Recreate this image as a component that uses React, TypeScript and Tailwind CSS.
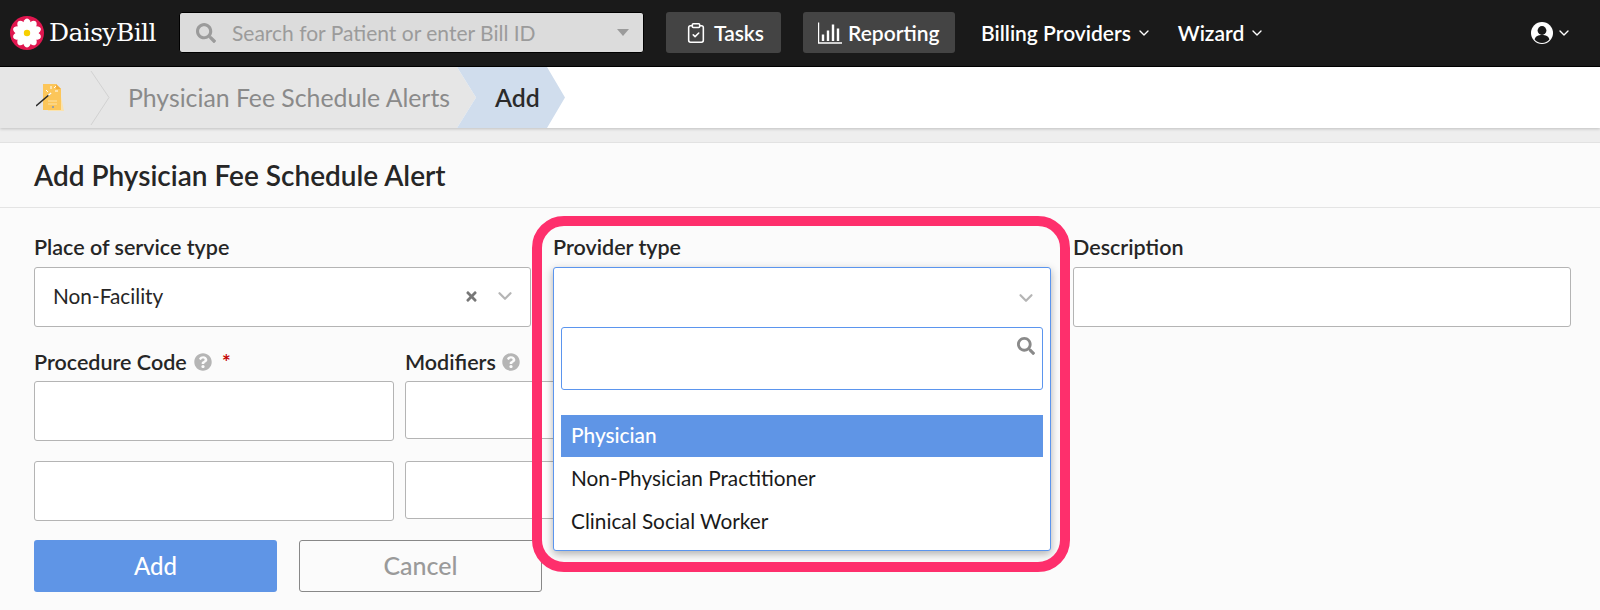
import { ChevronDown, ClipboardCheck } from "lucide-react";
import { FaQuestionCircle, FaSearch, FaTimes } from "react-icons/fa";

const FONT = "font-['Lato','Liberation_Sans',sans-serif]";

// Flor del logo
const Logo = () => (
  <svg viewBox="0 0 34 34" className="h-[34px] w-[34px] shrink-0">
    <circle cx="17" cy="17" r="17" fill="#e0164f" />
    {[0, 36, 72, 108, 144, 180, 216, 252, 288, 324].map((a) => (
      <ellipse key={a} cx="17" cy="8.5" rx="3.9" ry="6" fill="#fff" transform={`rotate(${a} 17 17)`} />
    ))}
    <circle cx="17" cy="17" r="4.6" fill="#fff" />
    <circle cx="17" cy="17" r="3.2" fill="#f7d000" />
  </svg>
);

const AlertsIcon = () => (
  <svg viewBox="0 0 32 32" className="h-[32px] w-[32px]">
    <path d="M9 5h14l5 24H12z" fill="#fbe3ad" />
    <path d="M7 2h13l5 5v21H7z" fill="#fcc65a" />
    <path d="M20 2l5 5h-5z" fill="#f3ad3a" />
    <path d="M0 24L14 12" stroke="#2b2b2b" strokeWidth="1.6" />
    <path d="M12.4 13.4L15 11" stroke="#fff" strokeWidth="1.6" />
    <path d="M15 4v3M19 9h3M18 6l2-2M10 8l2 2" stroke="#fff" strokeWidth="1" />
    <path d="M12 19h9M12 22h9" stroke="#fde3a8" strokeWidth="1" />
    <circle cx="17" cy="25" r="1" fill="#7f93b8" />
  </svg>
);

const ReportIcon = () => (
  <svg viewBox="0 0 24 24" className="h-[25px] w-[24px]" fill="none" stroke="#fff">
    <path d="M0.5 2v20.500H24" strokeWidth="1.4" />
    <path d="M5 14v6.500M10 10v10.500M15 4v16.500M20 8v12.500" strokeWidth="2.4" />
  </svg>
);

const UserIcon = () => (
  <svg viewBox="0 0 22 22" className="h-[22px] w-[22px]">
    <circle cx="11" cy="11" r="11" fill="#fff" />
    <circle cx="11" cy="8.500" r="4.400" fill="#1a1a1a" />
    <path d="M3.600 17.500c1-3.600 3.600-4.600 7.400-4.600s6.400 1 7.400 4.600C16.600 19.800 14 21 11 21s-5.600-1.200-7.400-3.500z" fill="#1a1a1a" />
  </svg>
);

const CrumbSeparator = () => (
  <svg viewBox="0 0 20 61" className="absolute left-[90px] top-0 h-[61px] w-[20px]" fill="none">
    <path d="M1 4l18 26.500L1 58" stroke="#d2d2d2" strokeWidth="1" />
  </svg>
);

const Field = ({ className = "" }: { className?: string }) => (
  <div className={`rounded-[3px] border border-[#b4b4b4] bg-white ${className}`} />
);

const Help = () => <FaQuestionCircle className="h-[18px] w-[18px] text-[#b5b5b5]" />;

const Navbar = () => (
  <nav className="flex h-[67px] items-center border-b border-black bg-[#1a1a1a] pb-px pl-[10px] text-white">
    <Logo />
    <span className="ml-[5px] w-[130px] font-['DejaVu_Serif',serif] text-[25px] leading-none tracking-[-0.6px]">
      DaisyBill
    </span>
    <div className="flex h-[41px] w-[465px] items-center rounded-[3px] border border-black bg-[#dcdcdc] pl-[16px] pr-[14px] text-[#9b9b9b]">
      <FaSearch className="h-[20px] w-[20px]" />
      <span className="ml-[16px] flex-1 text-[21px]">Search for Patient or enter Bill ID</span>
      <span className="h-0 w-0 border-x-[6px] border-t-[7px] border-x-transparent border-t-[#9b9b9b]" />
    </div>
    <button className="ml-[22px] flex h-[41px] w-[115px] items-center rounded-[3px] bg-[#444] pl-[19px] text-[21px] font-semibold">
      <ClipboardCheck className="h-[22px] w-[22px]" strokeWidth={1.7} />
      <span className="ml-[7px]">Tasks</span>
    </button>
    <button className="ml-[22px] flex h-[41px] w-[152px] items-center rounded-[3px] bg-[#444] pl-[15px] text-[21px] font-semibold">
      <ReportIcon />
      <span className="ml-[6px]">Reporting</span>
    </button>
    <span className="ml-[26px] flex items-center text-[21px] font-semibold">
      Billing Providers
      <ChevronDown className="ml-[5px] h-[16px] w-[16px]" />
    </span>
    <span className="ml-[26px] flex items-center text-[21px] font-semibold">
      Wizard
      <ChevronDown className="ml-[5px] h-[16px] w-[16px]" />
    </span>
    <span className="ml-auto mr-[28px] flex items-center">
      <UserIcon />
      <ChevronDown className="ml-[3px] h-[16px] w-[16px]" />
    </span>
  </nav>
);

const Breadcrumb = () => (
  <div className="relative z-10 flex h-[61px] bg-white text-[24.800px] shadow-[0_1px_3px_rgba(0,0,0,0.2)]">
    <div className="relative flex w-[476px] items-center bg-[#e6e6e6] pl-[36px] [clip-path:polygon(0_0,457px_0,100%_50%,457px_100%,0_100%)]">
      <AlertsIcon />
      <CrumbSeparator />
      <span className="ml-[60px] text-[#8a8a8a]">Physician Fee Schedule Alerts</span>
    </div>
    <div className="-ml-[19px] flex w-[108px] items-center bg-[#d0dded] pl-[38px] font-semibold text-[#2b2b2b] [clip-path:polygon(0_0,90px_0,100%_50%,90px_100%,0_100%,19px_50%)]">
      Add
    </div>
  </div>
);

const Dropdown = () => (
  <div className="absolute left-[553px] top-[267px] z-20 flex h-[284px] w-[498px] flex-col rounded-[3px] border border-[#5b95ee] bg-white shadow-[0_3px_8px_rgba(0,0,0,0.3)]">
    <div className="flex h-[59px] items-center justify-end pr-[13px]">
      <ChevronDown className="h-[22px] w-[22px] text-[#b5b5b5]" strokeWidth={2.4} />
    </div>
    <div className="mx-[7px] flex h-[63px] justify-end rounded-[3px] border border-[#5b95ee] pr-[7px] pt-[9px]">
      <FaSearch className="h-[18px] w-[18px] text-[#8a8a8a]" />
    </div>
    <ul className="mx-[7px] mt-[25px] text-[20.800px] text-[#1a1a1a]">
      <li className="flex h-[42px] items-center bg-[#5f95e6] pb-[2px] pl-[10px] font-medium text-white">Physician</li>
      <li className="flex h-[43px] items-center pb-[2px] pl-[10px]">Non-Physician Practitioner</li>
      <li className="flex h-[43px] items-center pb-[2px] pl-[10px]">Clinical Social Worker</li>
    </ul>
  </div>
);

const Form = () => (
  <div className="pl-[34px] pr-[29px] pt-[29px]">
    <div className="grid grid-cols-[497px_498px_498px] gap-x-[22px] text-[21.500px]">
      <div>
        <label className="block h-[30px] font-semibold leading-[20px]">Place of service type</label>
        <div className="flex h-[60px] items-center rounded-[3px] border border-[#b4b4b4] bg-white pb-[2px] pl-[18px] pr-[14px] text-[20.800px]">
          <span className="flex-1">Non-Facility</span>
          <FaTimes className="h-[15px] w-[15px] text-[#777]" />
          <ChevronDown className="ml-[15px] h-[22px] w-[22px] text-[#b5b5b5]" strokeWidth={2.4} />
        </div>
      </div>
      <div>
        <label className="block h-[30px] font-semibold leading-[20px]">Provider type</label>
      </div>
      <div>
        <label className="block h-[30px] font-semibold leading-[20px]">Description</label>
        <Field className="h-[60px]" />
      </div>
    </div>
    <div className="mt-[25px] grid grid-cols-[360px_360px] gap-x-[11px] text-[21.500px]">
      <div className="flex h-[31px] items-start font-semibold leading-[20px]">
        Procedure Code
        <span className="ml-[7px] mt-[1px]"><Help /></span>
        <span className="ml-[10px] text-[#c40000]">*</span>
      </div>
      <div className="flex h-[31px] items-start font-semibold leading-[20px]">
        Modifiers
        <span className="ml-[6px] mt-[1px]"><Help /></span>
      </div>
    </div>
    <div className="mt-[-2px] grid grid-cols-[360px_360px] gap-x-[11px] gap-y-[20px]">
      <Field className="h-[60px]" />
      <Field className="h-[58px]" />
      <Field className="h-[60px]" />
      <Field className="h-[58px]" />
    </div>
    <div className="mt-[19px] flex gap-[22px]">
      <button className="h-[52px] w-[243px] rounded-[3px] bg-[#5f95e6] text-[24px] font-medium text-white">Add</button>
      <button className="h-[52px] w-[243px] rounded-[3px] border border-[#888] text-[25px] font-medium text-[#9a9a9a]">Cancel</button>
    </div>
  </div>
);

const App = () => (
  <div className={`relative h-[610px] w-[1600px] overflow-hidden bg-[#eeeeee] text-[#262626] ${FONT}`}>
    <Navbar />
    <Breadcrumb />
    <main className="mt-[14px] h-[468px] border-t border-[#e2e2e2] bg-[#fbfbfb]">
      <h1 className="flex h-[65px] items-center border-b border-[#e4e4e4] pl-[34px] text-[28px] font-semibold">
        Add Physician Fee Schedule Alert
      </h1>
      <Form />
    </main>
    <Dropdown />
    {/* Marco de anotación rosa */}
    <div className="pointer-events-none absolute left-[532px] top-[216px] z-30 h-[356px] w-[538px] rounded-[32px] border-[10px] border-[#fe2f6c]" />
  </div>
);

export default App;
